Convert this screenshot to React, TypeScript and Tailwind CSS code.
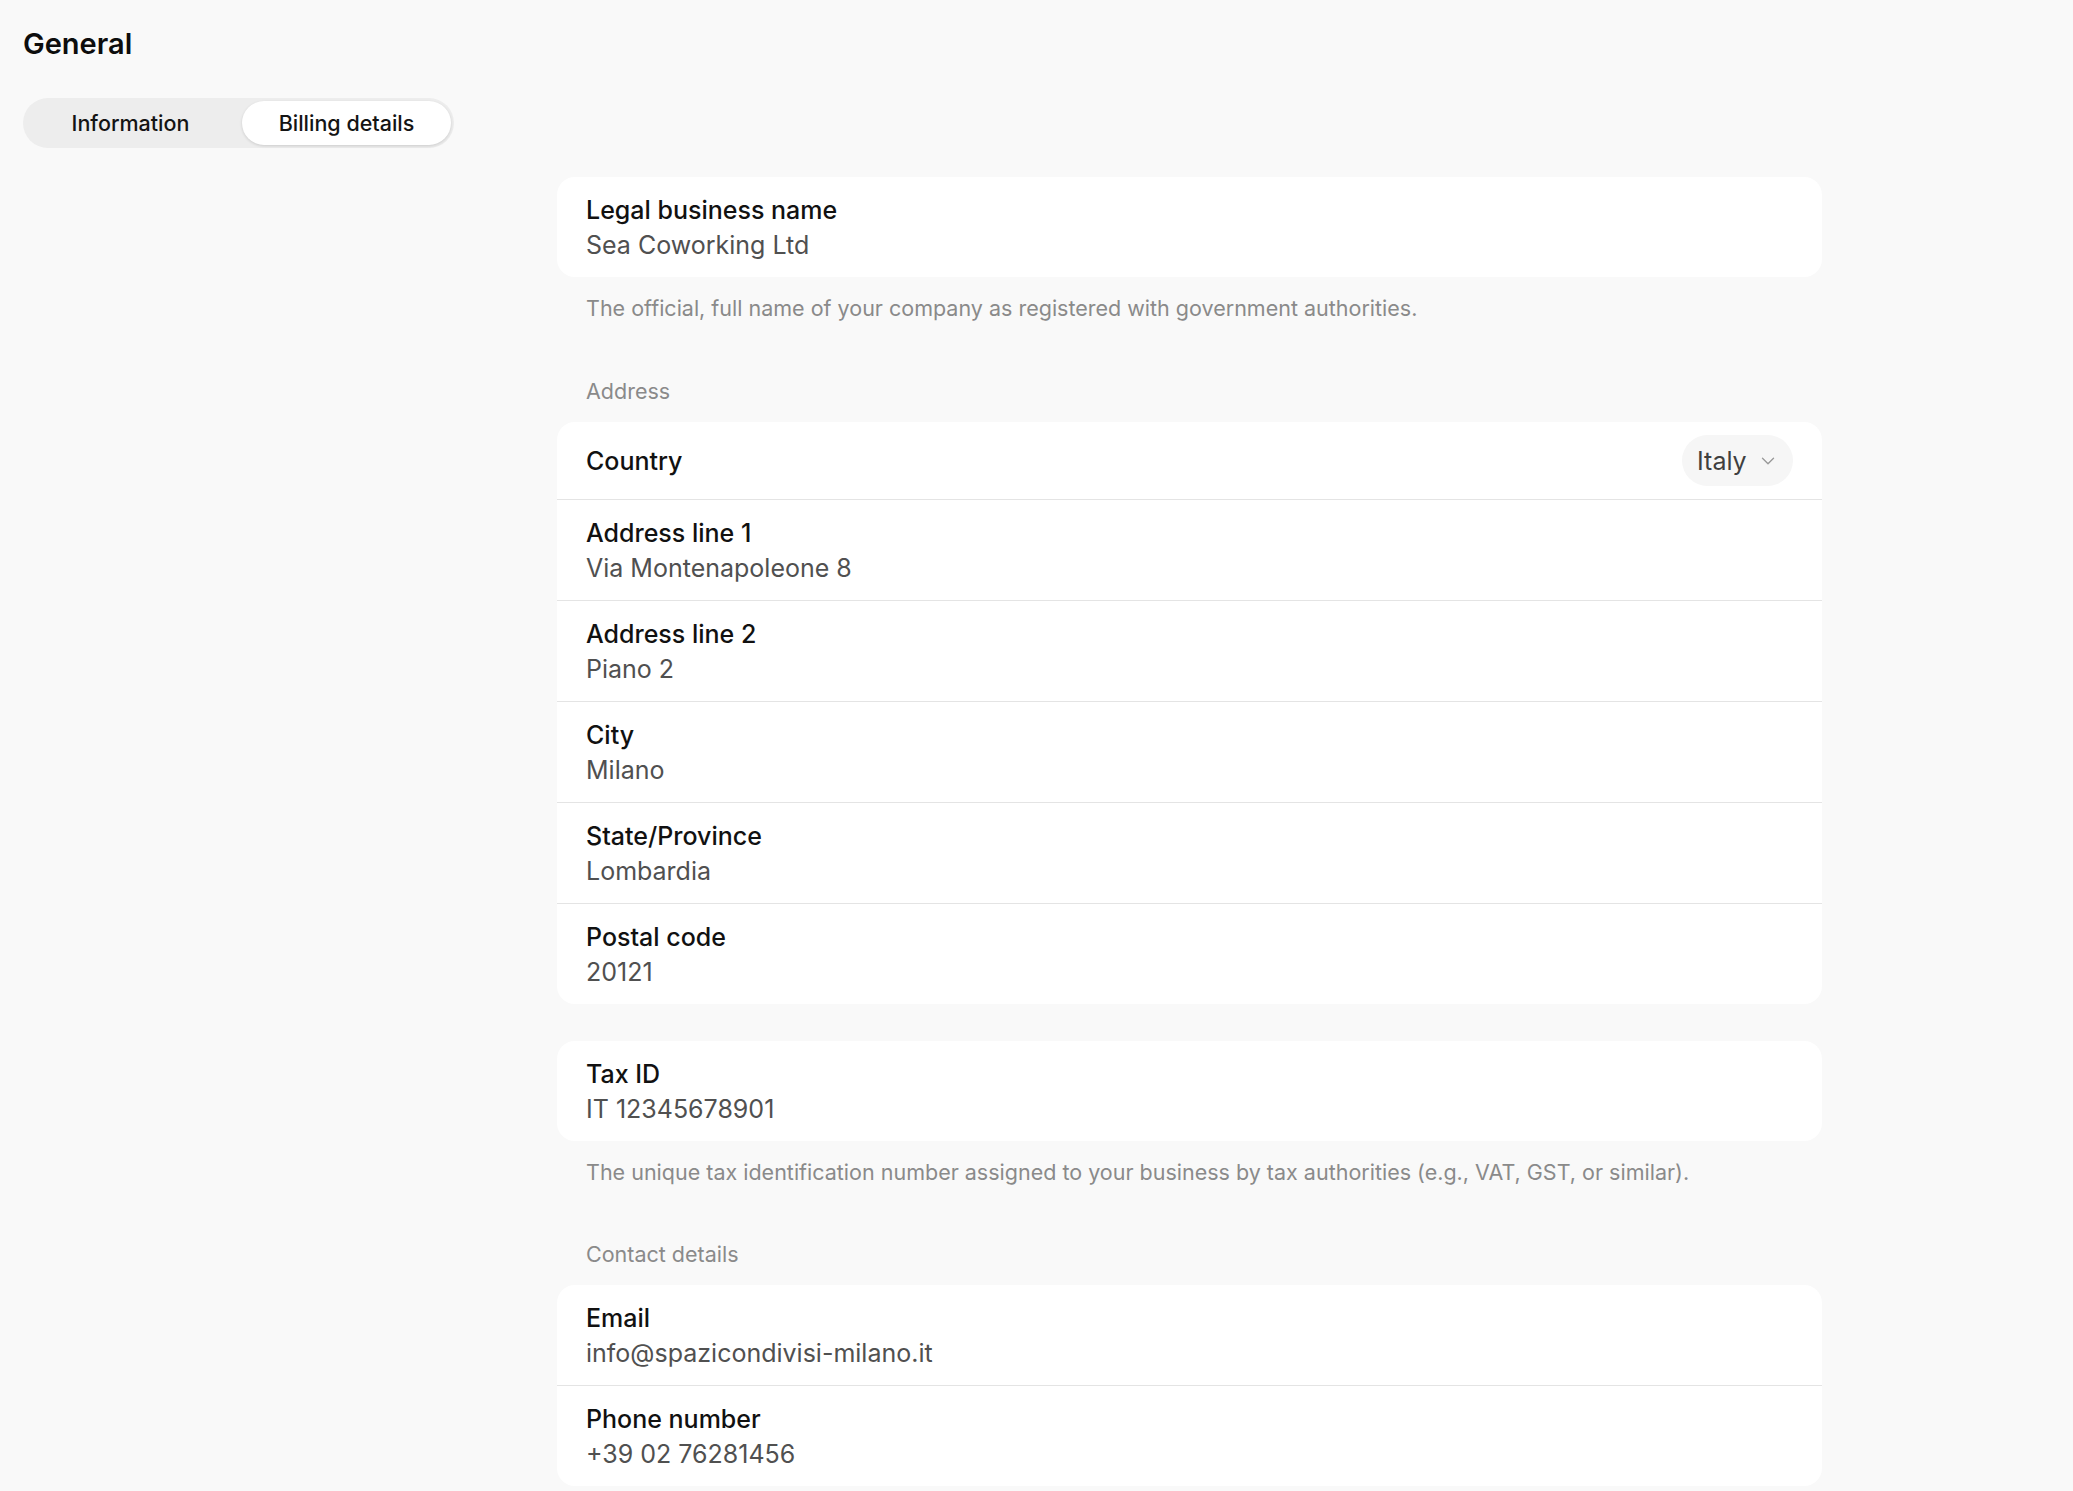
import { ChevronDown } from "lucide-react";

interface Field {
  label: string;
  value: string;
}

const address: Field[] = [
  { label: "Address line 1", value: "Via Montenapoleone 8" },
  { label: "Address line 2", value: "Piano 2" },
  { label: "City", value: "Milano" },
  { label: "State/Province", value: "Lombardia" },
  { label: "Postal code", value: "20121" },
];

const contact: Field[] = [
  { label: "Email", value: "info@spazicondivisi-milano.it" },
  { label: "Phone number", value: "+39 02 76281456" },
];

function FieldRow({ field, divider }: { field: Field; divider?: boolean }) {
  return (
    <div className={divider ? "pl-[29px] border-t border-[#e4e4e4]" : "pl-[29px]"}>
      <div className="pt-[16px] pb-[14px] pr-[29px]">
        <div className="text-[25px] leading-[35px] font-medium text-[#111111]">{field.label}</div>
        <div className="text-[25px] leading-[35px] text-[#505050]">{field.value}</div>
      </div>
    </div>
  );
}

function Card({ children }: { children: React.ReactNode }) {
  return <div className="bg-white rounded-[18px] overflow-hidden">{children}</div>;
}

function Helper({ children }: { children: React.ReactNode }) {
  return <p className="pl-[29px] mt-[17px] text-[21.5px] leading-[28px] text-[#8a8a8a]">{children}</p>;
}

function SectionLabel({ children, top }: { children: React.ReactNode; top: string }) {
  return (
    <div className={`pl-[29px] ${top} mb-[17px] text-[21.5px] leading-[28px] text-[#8a8a8a]`}>
      {children}
    </div>
  );
}

export default function App() {
  return (
    <div
      className="min-h-screen bg-[#f9f9f9] px-[23px] pt-[24px] pb-[40px]"
      style={{ fontFamily: "Inter, 'Noto Sans', sans-serif" }}
    >
      <h1 className="text-[29px] leading-[40px] font-semibold text-[#0d0d0d]">General</h1>

      <div className="mt-[34px] w-[431px] h-[50px] rounded-full bg-[#ededed] p-[3px] grid grid-cols-2 gap-[7px]">
        <button className="rounded-full text-[21.5px] font-medium text-[#141414]">Information</button>
        <button className="rounded-full bg-white text-[21.5px] font-medium text-[#141414] shadow-[0_1px_3px_rgba(0,0,0,0.14)]">
          Billing details
        </button>
      </div>

      <div className="ml-[534px] w-[1265px] mt-[29px]">
        <Card>
          <FieldRow field={{ label: "Legal business name", value: "Sea Coworking Ltd" }} />
        </Card>
        <Helper>The official, full name of your company as registered with government authorities.</Helper>

        <SectionLabel top="mt-[55px]">Address</SectionLabel>
        <Card>
          <div className="h-[77px] pl-[29px] pr-[29px] flex items-center justify-between">
            <span className="pt-[2px] text-[25px] font-medium text-[#111111]">Country</span>
            <div className="h-[51px] w-[111px] rounded-full bg-[#f6f6f6] pl-[15px] pr-[12px] flex items-center gap-[10px]">
              <span className="pt-[2px] text-[25px] text-[#3f3f3f]">Italy</span>
              <ChevronDown size={22} strokeWidth={1.5} className="text-[#9a9a9a]" />
            </div>
          </div>
          {address.map((f) => (
            <FieldRow key={f.label} field={f} divider />
          ))}
        </Card>

        <div className="mt-[37px]">
          <Card>
            <FieldRow field={{ label: "Tax ID", value: "IT 12345678901" }} />
          </Card>
        </div>
        <Helper>
          The unique tax identification number assigned to your business by tax authorities (e.g., VAT, GST, or
          similar).
        </Helper>

        <SectionLabel top="mt-[54px]">Contact details</SectionLabel>
        <Card>
          {contact.map((f, i) => (
            <FieldRow key={f.label} field={f} divider={i > 0} />
          ))}
        </Card>
      </div>
    </div>
  );
}
